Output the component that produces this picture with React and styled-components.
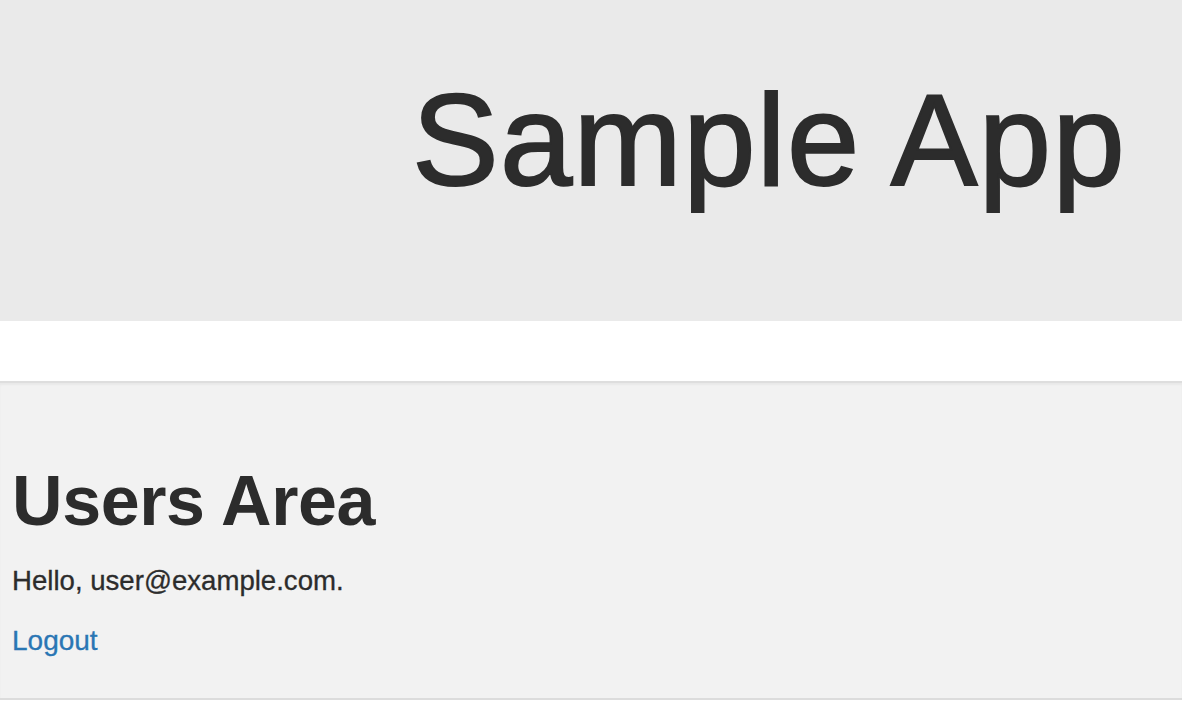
import React from 'react';
import styled, { createGlobalStyle } from 'styled-components';

const GlobalStyle = createGlobalStyle`
  body {
    margin: 0;
    background: #fff;
    font-family: "Liberation Sans", Arial, sans-serif;
    color: #2c2c2c;
  }
`;

const Banner = styled.header`
  box-sizing: border-box;
  height: 321px;
  padding: 75px 56px 0 0;
  background: #eaeaea;
  text-align: right;
`;

const BannerTitle = styled.h1`
  margin: 0;
  font-size: 130px;
  line-height: 1;
  font-weight: 400;
  letter-spacing: 1.3px;
  color: #2c2c2c;
  -webkit-text-stroke: 2px #2c2c2c;
`;

const Spacer = styled.div`
  height: 60px;
`;

const Panel = styled.section`
  box-sizing: border-box;
  height: 319px;
  display: flex;
  flex-direction: column;
  align-items: flex-start;
  padding: 83px 12px 0;
  background: #f2f2f2;
  border-top: 2px solid #dedede;
  border-bottom: 2px solid #dcdcdc;
  box-shadow: inset 0 2px 2px rgba(0, 0, 0, 0.04);
`;

const PanelTitle = styled.h2`
  margin: 0 0 26px;
  font-size: 70px;
  line-height: 1;
  font-weight: 700;
  letter-spacing: -0.4px;
`;

const Text = styled.p`
  margin: 0 0 ${props => props.gap || 0}px;
  font-size: 27.6px;
  line-height: 1.37;
  -webkit-text-stroke: 0.3px currentColor;
`;

const Link = styled.a`
  font-size: 28px;
  line-height: 1.37;
  color: #2a76b4;
  text-decoration: none;
  -webkit-text-stroke: 0.3px currentColor;
`;

export default function App() {
  return (
    <>
      <GlobalStyle />
      <Banner>
        <BannerTitle>Sample App</BannerTitle>
      </Banner>
      <Spacer />
      <Panel>
        <PanelTitle>Users Area</PanelTitle>
        <Text gap={22}>Hello, user@example.com.</Text>
        <Link href="#">Logout</Link>
      </Panel>
    </>
  );
}
